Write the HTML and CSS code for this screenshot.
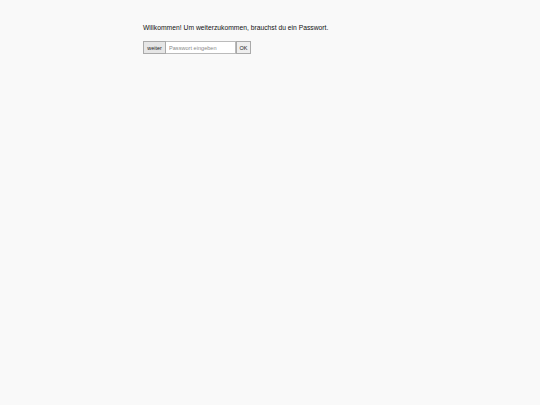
FILE: index.html
```html
<!DOCTYPE html>
<html lang="de">
<head>
<meta charset="utf-8">
<title>Passwort</title>
<link rel="stylesheet" href="styles.css">
</head>
<body>
<main class="wrap">
  <p class="intro">Willkommen! Um weiterzukommen, brauchst du ein Passwort.</p>
  <form class="group">
    <span class="addon">weiter</span>
    <input class="field" type="password" placeholder="Passwort eingeben">
    <button class="ok" type="button">OK</button>
  </form>
</main>
</body>
</html>
```
FILE: styles.css
```css
html, body {
  margin: 0;
  padding: 0;
  background: #f9f9f9;
}
body {
  font-family: "Liberation Sans", Arial, sans-serif;
  color: #111;
}
.wrap {
  padding: 23px 0 0 143px;
}
.intro {
  margin: 0;
  font-size: 6.75px;
  line-height: 9px;
}
.group {
  display: flex;
  margin-top: 9px;
  height: 13px;
}
.addon {
  display: flex;
  align-items: center;
  justify-content: center;
  box-sizing: border-box;
  width: 23px;
  height: 13px;
  background: #e6e6e6;
  border: 1px solid #aaa;
  font-size: 5.4px;
  color: #222;
}
.field {
  box-sizing: border-box;
  width: 70px;
  height: 13px;
  margin: 0;
  padding: 0 3px;
  border: 1px solid #bbb;
  border-left: 0;
  background: #fff;
  font-family: "Liberation Sans", Arial, sans-serif;
  font-size: 5.6px;
  outline: none;
}
.field::placeholder {
  color: #8a8a8a;
}
.ok {
  box-sizing: border-box;
  width: 15px;
  height: 13px;
  margin: 0;
  padding: 0;
  border: 1px solid #aaa;
  background: #efefef;
  font-family: "Liberation Sans", Arial, sans-serif;
  font-size: 5.5px;
  color: #222;
}
```
